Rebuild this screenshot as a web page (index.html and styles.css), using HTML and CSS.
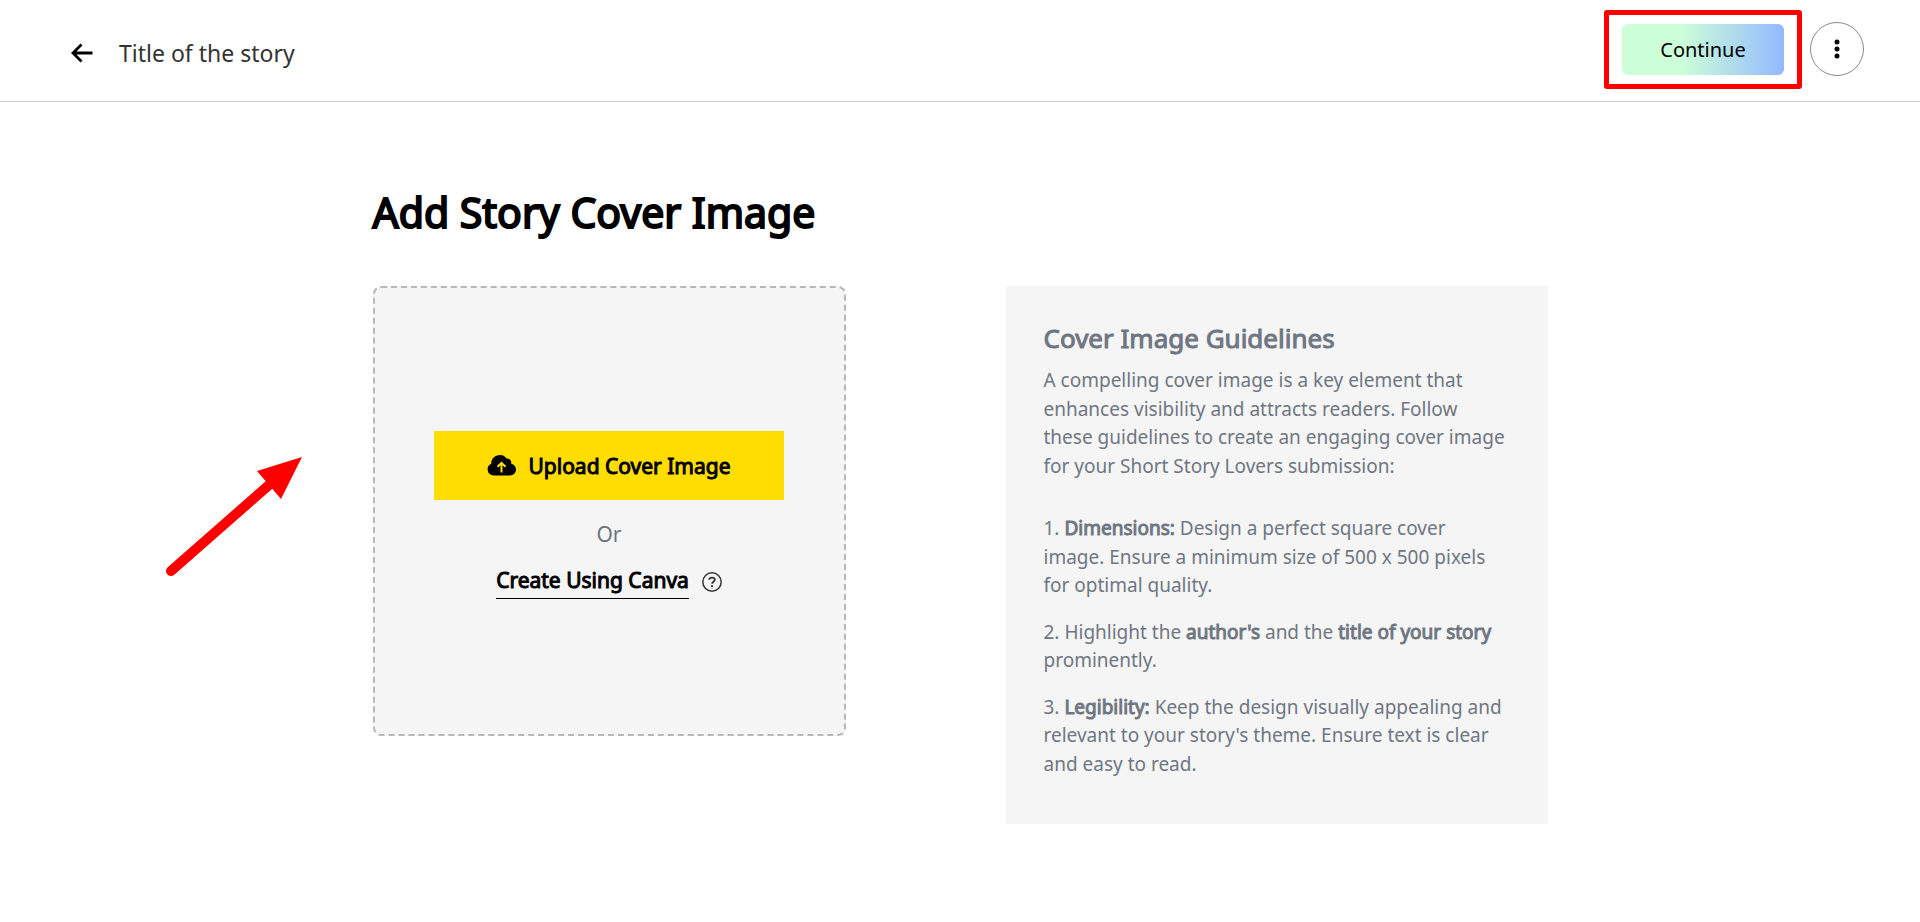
FILE: index.html
```html
<!DOCTYPE html>
<html lang="en">
<head>
    <meta charset="UTF-8">
    <meta name="viewport" content="width=device-width, initial-scale=1.0">
    <title>Add Story Cover Image</title>
    <link rel="stylesheet" href="styles.css">
</head>
<body>
    <header class="topbar">
        <div class="topbar-left">
            <a href="#" class="back" aria-label="Back">
                <svg width="22" height="20" viewBox="0 0 22 20" fill="none" stroke="#000" stroke-width="2.8">
                    <path d="M10.5 1.5 2 10l8.500 8.500M2 10h19.500"/>
                </svg>
            </a>
            <span class="story-title">Title of the story</span>
        </div>
        <div class="topbar-right">
            <div class="highlight">
                <button type="button" class="btn-continue">Continue</button>
            </div>
            <button type="button" class="btn-more" aria-label="More options">
                <svg width="6" height="20" viewBox="0 0 6 20">
                    <circle cx="3" cy="3" r="2.500"/>
                    <circle cx="3" cy="10" r="2.500"/>
                    <circle cx="3" cy="17" r="2.500"/>
                </svg>
            </button>
        </div>
    </header>

    <main class="container">
        <h1>Add Story Cover Image</h1>
        <div class="row">
            <section class="upload-box">
                <button type="button" class="btn-upload">
                    <svg width="29" height="21" viewBox="0 0 29 21">
                        <path d="M6.500 20.500A6.200 6.200 0 0 1 4.200 8.700 8.600 8.600 0 0 1 19.600 3.500a4.400 4.400 0 0 1 4.600 5.300 5.900 5.900 0 0 1-1.200 11.700z"/>
                        <path d="M14.500 17.500V8M10.500 11.800l4-4 4 4" fill="none" stroke="#ffdd00" stroke-width="2"/>
                    </svg>
                    Upload Cover Image
                </button>
                <p class="or">Or</p>
                <div class="canva">
                    <a href="#">Create Using Canva</a>
                    <svg width="20" height="20" viewBox="0 0 20 20" fill="none" stroke="#333" stroke-width="1.500">
                        <circle cx="10" cy="10" r="9.200"/>
                        <path d="M7.200 7.800C7.300 5 12.800 5 12.800 7.800c0 1.900-2.700 1.900-2.700 4" stroke-width="1.800"/>
                        <circle cx="10" cy="14.200" r="1.100" fill="#333" stroke="none"/>
                    </svg>
                </div>
            </section>

            <section class="guidelines">
                <h2>Cover Image Guidelines</h2>
                <p class="intro">A compelling cover image is a key element that enhances visibility and attracts readers. Follow these guidelines to create an engaging cover image for your Short Story Lovers submission:</p>
                <p>1. <b>Dimensions:</b> Design a perfect square cover image. Ensure a minimum size of 500 x 500 pixels for optimal quality.</p>
                <p>2. Highlight the <b>author's</b> and the <b>title of your story</b> prominently.</p>
                <p>3. <b>Legibility:</b> Keep the design visually appealing and relevant to your story's theme. Ensure text is clear and easy to read.</p>
            </section>
        </div>
    </main>

    <svg class="pointer" width="136" height="120" viewBox="0 0 136 120">
        <path d="M5 114 103 28" stroke="#f00" stroke-width="10" stroke-linecap="round"/>
        <path d="M136 0 91 14l24 28z" fill="#f00"/>
    </svg>
</body>
</html>
```
FILE: styles.css
```css
* {
    box-sizing: border-box;
}
body {
    margin: 0;
    font-family: 'Noto Sans', 'Open Sans', sans-serif;
    font-size: 19px;
    background: #fff;
    color: #000;
}
button {
    font-family: inherit;
    color: #000;
    border: none;
    cursor: pointer;
}
/* regular face thickened, keeps the regular widths */
h1, h2, b, .btn-upload, .canva a {
    font-weight: 400;
    -webkit-text-stroke: 1px currentColor;
}
.topbar {
    display: flex;
    justify-content: space-between;
    padding: 22px 56px 25px 71px;
    border-bottom: 1px solid #c8c8c8;
}
.topbar-left {
    display: flex;
    align-items: center;
    align-self: flex-end;
    gap: 26px;
    height: 46px;
}
.back {
    display: flex;
}
.story-title {
    font-size: 23px;
    color: #333;
}
.topbar-right {
    display: flex;
    align-items: center;
    gap: 26px;
}
.highlight {
    position: relative;
}
.highlight::after {
    content: '';
    position: absolute;
    inset: -14px -18px;
    border: 5px solid #f00;
    border-radius: 3px;
    pointer-events: none;
}
.btn-continue {
    display: block;
    width: 162px;
    height: 51px;
    border-radius: 6px;
    font-size: 20px;
    background: linear-gradient(90deg, #cdffd8 36%, #94b9ff);
}
.btn-more {
    display: flex;
    align-items: center;
    justify-content: center;
    width: 54px;
    height: 54px;
    padding: 0;
    border: 1px solid #888;
    border-radius: 50%;
    background: #fff;
}
.container {
    max-width: 1175px;
    margin: 0 auto;
    padding: 80px 0;
}
h1 {
    margin: 0 0 44px;
    font-size: 41px;
    line-height: 60px;
    -webkit-text-stroke-width: 2px;
}
.row {
    display: grid;
    grid-template-columns: 473fr 542fr;
    align-items: start;
    gap: 160px;
}
.upload-box {
    display: flex;
    flex-direction: column;
    align-items: center;
    justify-content: center;
    min-height: 450px;
    padding-top: 8px;
    background: #f5f5f5;
    border: 2px dashed #b8b8b8;
    border-radius: 8px;
}
.btn-upload {
    display: flex;
    align-items: center;
    justify-content: center;
    gap: 12px;
    width: 350px;
    height: 69px;
    background: #ffdd00;
    font-size: 21px;
}
.or {
    margin: 18px 0 14px;
    font-size: 21px;
    line-height: 32px;
    color: #6c757d;
}
.canva {
    display: flex;
    align-items: center;
    gap: 13px;
}
.canva a {
    color: #000;
    font-size: 21px;
    line-height: 32px;
    padding-bottom: 2px;
    text-decoration: none;
    border-bottom: 1px solid #000;
}
.guidelines {
    padding: 34px 40px 46px 38px;
    background: #f5f5f5;
    color: #6f7682;
}
.guidelines h2 {
    margin: 0 0 10px;
    font-size: 26px;
    line-height: 36px;
}
.guidelines p {
    margin: 0 0 18px;
    line-height: 1.5;
}
.guidelines .intro {
    margin-bottom: 34px;
}
.guidelines p:last-child {
    margin-bottom: 0;
}
.pointer {
    position: absolute;
    left: 166px;
    top: 457px;
}
```
